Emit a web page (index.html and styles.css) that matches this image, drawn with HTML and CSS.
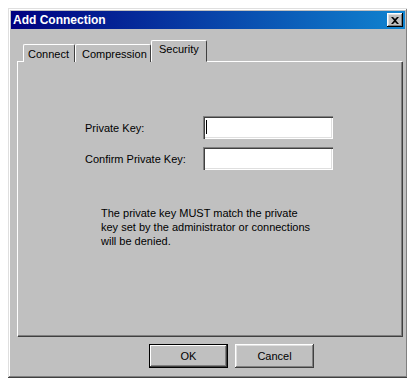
FILE: index.html
```html
<!DOCTYPE html>
<html lang="en">
<head>
    <meta charset="UTF-8">
    <title>Add Connection</title>
    <link rel="stylesheet" href="styles.css">
</head>
<body>
    <div class="window">
        <!-- Title bar -->
        <div class="titlebar">
            <span class="title">Add Connection</span>
            <span class="close-btn">
                <svg width="8" height="7" viewBox="0 0 8 7">
                    <path d="M0 0h2l2 2 2-2h2L5 3.5 8 7H6L4 5 2 7H0l3-3.5z" fill="#000"/>
                </svg>
            </span>
        </div>

        <!-- Tabs -->
        <div class="tabs">
            <div class="tab tab-connect">Connect</div>
            <div class="tab tab-compression">Compression</div>
            <div class="tab tab-security active">Security</div>
        </div>

        <!-- Security page -->
        <div class="panel">
            <div class="form-row">
                <label class="label">Private Key:</label>
                <div class="field"><span class="caret"></span></div>
            </div>
            <div class="form-row">
                <label class="label">Confirm Private Key:</label>
                <div class="field"></div>
            </div>
            <p class="note">
                The private key MUST match the private<br>
                key set by the administrator or connections<br>
                will be denied.
            </p>
        </div>

        <!-- Dialog buttons -->
        <div class="buttons">
            <button class="btn default">OK</button>
            <button class="btn">Cancel</button>
        </div>
    </div>
</body>
</html>
```

FILE: styles.css
```css
body {
    margin: 8px;
    background-color: #FFFFFF;
    font-family: 'Liberation Sans', Arial, sans-serif;
    font-size: 11px;
    color: #000000;
}
.window {
    box-sizing: border-box;
    width: 400px;
    height: 370px;
    padding: 3px;
    background-color: #C0C0C0;
    box-shadow: inset -1px -1px #404040, inset 1px 1px #DFDFDF,
                inset -2px -2px #808080, inset 2px 2px #FFFFFF;
    display: flex;
    flex-direction: column;
}
.titlebar {
    height: 18px;
    display: flex;
    align-items: center;
    justify-content: space-between;
    padding: 0 2px 0 2px;
    background: linear-gradient(to right, #000080, #1084D0);
}
.title {
    color: #FFFFFF;
    font-weight: bold;
    font-size: 12px;
}
.close-btn {
    box-sizing: border-box;
    width: 16px;
    height: 14px;
    display: flex;
    align-items: center;
    justify-content: center;
    background-color: #C0C0C0;
    box-shadow: inset -1px -1px #000000, inset 1px 1px #FFFFFF,
                inset -2px -2px #808080, inset 2px 2px #DFDFDF;
}
.tabs {
    display: flex;
    align-items: flex-end;
    height: 22px;
    margin: 10px 0 0 12px;
    position: relative;
    z-index: 1;
}
.tab {
    box-sizing: border-box;
    height: 18px;
    padding: 3px 0 0 4px;
    background-color: #C0C0C0;
    border-top: 1px solid #FFFFFF;
    border-left: 1px solid #FFFFFF;
    border-right: 1px solid #404040;
    border-radius: 2px 2px 0 0;
    margin-bottom: -1px;
}
.tab-connect {
    width: 52px;
}
.tab-compression {
    width: 76px;
    padding-left: 6px;
}
.tab-security {
    width: 56px;
    padding-left: 7px;
}
.tab.active {
    height: 22px;
    padding-top: 2px;
    border-bottom: 1px solid #C0C0C0;
}
.panel {
    box-sizing: border-box;
    height: 275px;
    margin: 0 3px 0 6px;
    padding: 54px 0 0 67px;
    border-top: 1px solid #FFFFFF;
    border-left: 1px solid #FFFFFF;
    box-shadow: inset -1px -1px #808080, 1px 1px #404040;
}
.form-row {
    display: flex;
    align-items: center;
    margin-bottom: 8px;
}
.label {
    width: 118px;
}
.field {
    box-sizing: border-box;
    width: 130px;
    height: 23px;
    background-color: #FFFFFF;
    padding: 4px 0 0 3px;
    box-shadow: inset 1px 1px #808080, inset 2px 2px #404040,
                inset -1px -1px #FFFFFF, inset -2px -2px #DFDFDF;
}
.caret {
    display: block;
    width: 1px;
    height: 14px;
    background-color: #000000;
}
.note {
    margin: 36px 0 0 16px;
    line-height: 14px;
}
.buttons {
    display: flex;
    gap: 7px;
    margin: 8px 0 0 138px;
}
.btn {
    box-sizing: border-box;
    width: 79px;
    height: 24px;
    padding: 0;
    border: none;
    background-color: #C0C0C0;
    font-family: 'Liberation Sans', Arial, sans-serif;
    font-size: 11px;
    color: #000000;
    box-shadow: inset -1px -1px #404040, inset 1px 1px #FFFFFF,
                inset -2px -2px #808080, inset 2px 2px #DFDFDF;
}
.btn.default {
    border: 1px solid #000000;
    box-shadow: inset -1px -1px #404040, inset 1px 1px #FFFFFF,
                inset -2px -2px #808080;
}
```
